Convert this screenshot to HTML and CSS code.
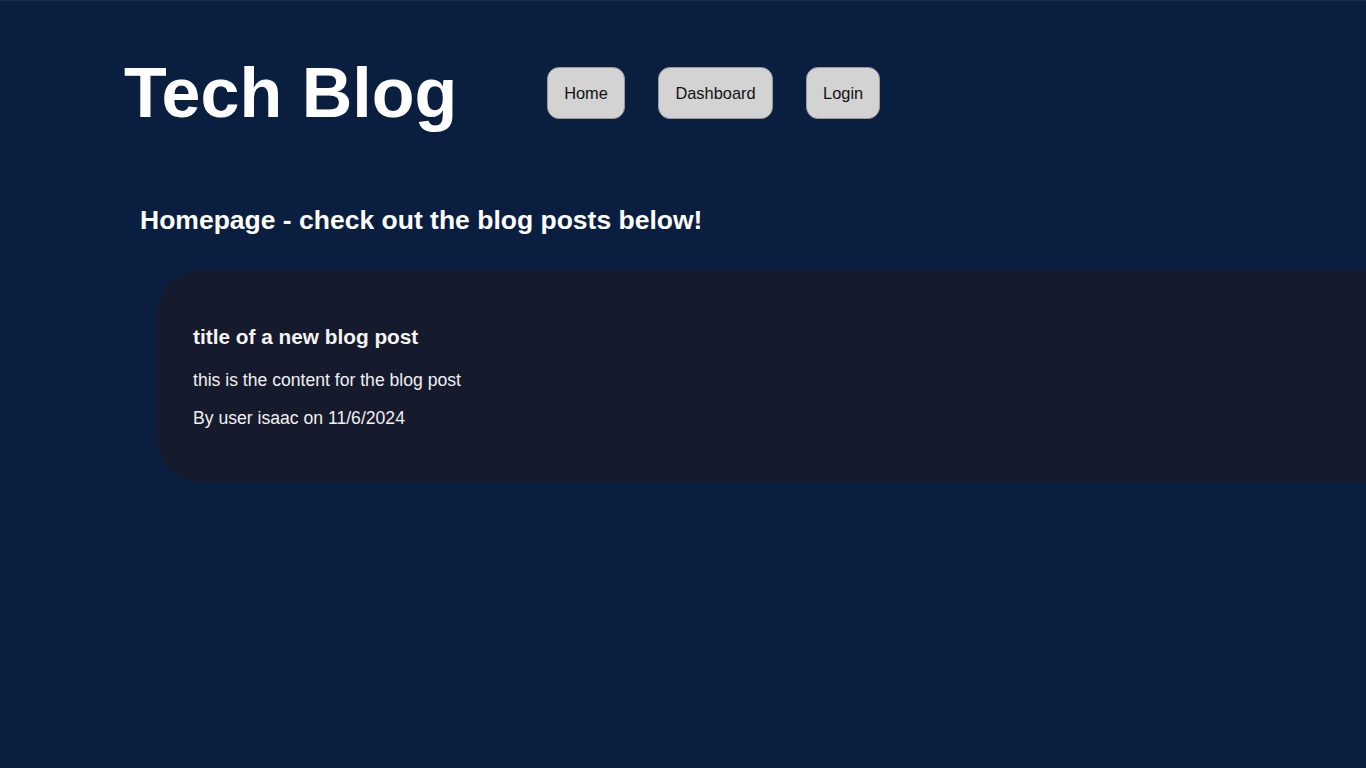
FILE: index.html
```html
<!DOCTYPE html>
<html lang="en">
<head>
<meta charset="utf-8">
<title>Tech Blog</title>
<link rel="stylesheet" href="styles.css">
</head>
<body>
<div class="page">
  <header class="header">
    <h1 class="brand">Tech Blog</h1>
    <nav class="nav">
      <button class="nav-btn">Home</button>
      <button class="nav-btn">Dashboard</button>
      <button class="nav-btn">Login</button>
    </nav>
  </header>
  <main class="main">
    <h2 class="page-title">Homepage - check out the blog posts below!</h2>
    <article class="post">
      <h3 class="post-title">title of a new blog post</h3>
      <p class="post-content">this is the content for the blog post</p>
      <p class="post-meta">By user isaac on 11/6/2024</p>
    </article>
  </main>
</div>
</body>
</html>
```

FILE: styles.css
```css
html, body {
  margin: 0;
  padding: 0;
}

body {
  background: #0a1e3f;
  color: #ffffff;
  font-family: "Liberation Sans", Arial, sans-serif;
  border-top: 1px solid #1b2b4b;
  min-height: 767px;
  overflow: hidden;
}

.page {
  overflow: hidden;
}

.header {
  display: flex;
  align-items: center;
  padding: 52px 0 0 124px;
}

.brand {
  margin: 0;
  font-size: 70px;
  line-height: 80px;
  font-weight: 700;
  color: #ffffff;
}

.nav {
  display: flex;
  gap: 33.5px;
  margin-left: 90px;
}

.nav-btn {
  font-family: "Liberation Sans", Arial, sans-serif;
  font-size: 16.4px;
  color: #111111;
  background: #d3d3d3;
  border: 1px solid #9a9a9a;
  border-radius: 12px;
  padding: 16px;
  line-height: 18px;
}

.main {
  display: flex;
  flex-direction: column;
}

.page-title {
  margin: 72px 0 0 140px;
  font-size: 26.5px;
  font-weight: 700;
  line-height: normal;
}

.post {
  margin: 34px -120px 0 157px;
  padding: 36px;
  background: #161a2d;
  border-radius: 45px;
}

.post-title {
  margin: 19px 0 21px;
  font-size: 20.8px;
  font-weight: 700;
  line-height: normal;
  color: #f4f4f4;
}

.post-content {
  margin: 0 0 17px;
  font-size: 17.6px;
  line-height: normal;
  color: #f0f0f0;
}

.post-meta {
  margin: 0 0 17px;
  font-size: 17.6px;
  line-height: normal;
  color: #f0f0f0;
}
```
